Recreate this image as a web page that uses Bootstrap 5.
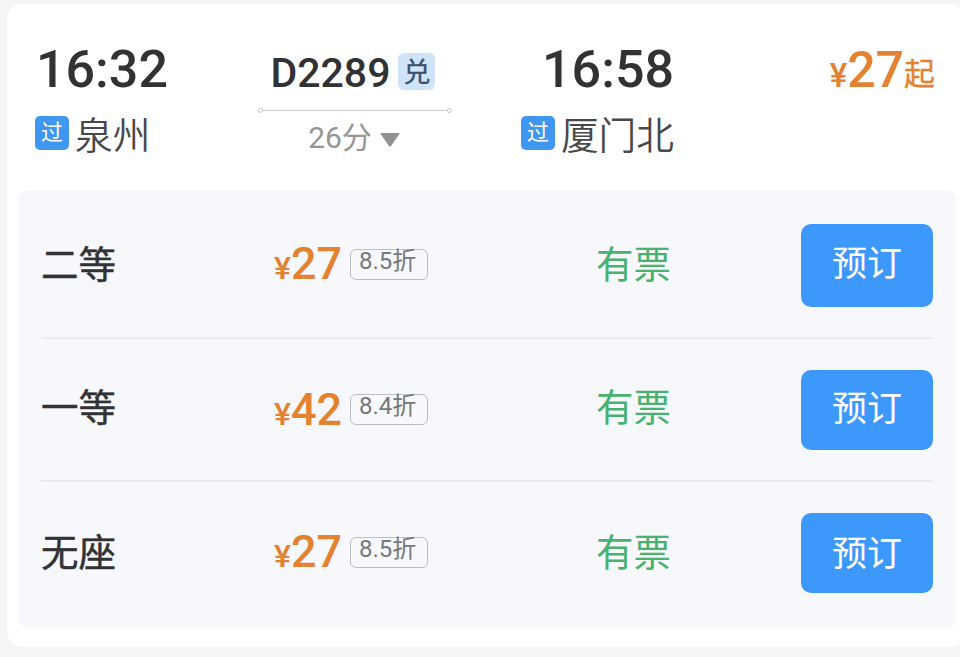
<!DOCTYPE html>
<html lang="zh-CN">
<head>
    <meta charset="UTF-8">
    <meta name="viewport" content="width=device-width, initial-scale=1">
    <title>D2289</title>
    <link href="https://cdn.jsdelivr.net/npm/bootstrap@5.3.0/dist/css/bootstrap.min.css" rel="stylesheet">
    <style>
        body {
            background: #f5f5f5;
            font-family: Roboto, "Noto Sans CJK SC", sans-serif;
            color: #323234;
            overflow: hidden;
        }

        .train-card {
            height: 643px;
            margin: 4px 0 0 7px;
            padding: 0 4px 0 11px;
            border-radius: 15px 6px 6px 15px;
        }

        /* Cabeçalho da viagem */
        .trip {
            height: 186px;
            padding: 36px 21px 0 17px;
        }

        .trip-from { width: 223px; }
        .trip-mid { width: 194px; padding-top: 3px; }
        .trip-to { width: 222px; }

        .trip-time {
            font-size: 52px;
            font-weight: 500;
            line-height: 60px;
        }

        .trip-from .trip-time { padding-left: 1px; }

        .station {
            height: 68px;
            font-size: 37.7px;
            font-weight: 350;
            line-height: 68px;
            color: #48484a;
        }

        .station-name { padding-top: 3px; }

        .pass-tag {
            width: 34px;
            height: 34px;
            margin: -2px 6px 0 0;
            border-radius: 5px;
            background: #3f97ef;
            color: #fff;
            font-size: 22px;
            font-weight: 400;
            line-height: 34px;
            text-align: center;
        }

        .train-no {
            padding-right: 4px;
            font-size: 41px;
            font-weight: 500;
            line-height: 60px;
        }

        .swap-tag {
            width: 37px;
            height: 37px;
            margin: -3px 0 0 8px;
            border-radius: 6px;
            background: #cfe3f9;
            color: #3a5068;
            font-size: 27px;
            font-weight: 400;
            line-height: 40px;
            text-align: center;
            -webkit-text-stroke: .3px;
        }

        .trip-line { height: 5px; margin-top: 5px; }
        .trip-line i { width: 5px; height: 5px; border: 1px solid #c4c4c4; border-radius: 50%; }
        .trip-line span { height: 1px; background: #cfcfcf; }

        .duration {
            padding-right: 2px;
            font-size: 30px;
            line-height: 49px;
            color: #969696;
        }

        .duration svg { margin-top: 4px; }

        .price { color: #e38332; font-weight: 500; }

        .trip-price {
            font-size: 50px;
            line-height: 60px;
        }

        .trip-price small { font-size: 33px; }
        .trip-price .price-from {
            position: relative;
            top: -2px;
            font-size: 31px;
            font-weight: 400;
            -webkit-text-stroke: .4px;
        }

        /* Lista de assentos */
        .seats {
            height: 438px;
            padding: 0 23px;
            border-radius: 10px;
            background: #f6f8fc;
        }

        .seat { height: 143px; border-bottom: 2px solid #e9ebee; }
        .seat:first-child { height: 149px; padding-top: 3px; }
        .seat:last-child { height: 142px; border: 0; }

        .seat-name, .seat-left {
            font-size: 37.5px;
            line-height: 60px;
        }

        .seat-name { width: 233px; -webkit-text-stroke: .45px; }
        .seat-price { width: 322px; }
        .seat-left { color: #48b26e; }

        .seat-price .price { padding-top: 2px; font-size: 45px; line-height: 60px; }
        .seat-price small { font-size: 32px; }

        .discount {
            width: 78px;
            height: 31px;
            margin: -1px 0 0 8px;
            padding-right: 3px;
            border: 1px solid #bcbec6;
            border-radius: 6px;
            color: #77787a;
            font-size: 24px;
            line-height: 22px;
            text-align: center;
        }

        .book-btn {
            width: 132px;
            height: 80px;
            padding: 0;
            border: 0;
            border-radius: 10px;
            background: #3d98fc;
            color: #fff;
            font-size: 35px;
            line-height: 60px;
        }

        .book-btn:hover { background: #2b86ea; color: #fff; }
        .seat:first-child .book-btn { height: 83px; }
        .seat:last-child .book-btn { padding-top: 3px; }
        .seat:nth-child(2) .seat-name, .seat:nth-child(2) .seat-left { padding-bottom: 3px; }
        .seat:nth-child(2) .price { padding-top: 4px; }
    </style>
</head>
<body>
    <div class="train-card bg-white">
        <div class="trip d-flex">
            <div class="trip-from">
                <div class="trip-time">16:32</div>
                <div class="station d-flex align-items-center"><span class="pass-tag">过</span><span class="station-name">泉州</span></div>
            </div>
            <div class="trip-mid">
                <div class="train-no d-flex align-items-center justify-content-center">D2289<span class="swap-tag">兑</span></div>
                <div class="trip-line d-flex align-items-center"><i></i><span class="flex-grow-1"></span><i></i></div>
                <div class="duration d-flex align-items-center justify-content-center">
                    26分
                    <svg class="ms-2" width="20" height="14" viewBox="0 0 20 14"><path d="M1 0h18q1 0 .4 1L11 13q-1 1-2 0L.6 1Q0 0 1 0z" fill="#929292"/></svg>
                </div>
            </div>
            <div class="trip-to d-flex flex-column align-items-end">
                <div class="trip-time">16:58</div>
                <div class="station d-flex align-items-center"><span class="pass-tag">过</span><span class="station-name">厦门北</span></div>
            </div>
            <div class="trip-price price ms-auto"><small>¥</small>27<small class="price-from">起</small></div>
        </div>

        <div class="seats">
            <div class="seat d-flex align-items-center">
                <div class="seat-name">二等</div>
                <div class="seat-price d-flex align-items-center"><span class="price"><small>¥</small>27</span><span class="discount">8.5折</span></div>
                <div class="seat-left">有票</div>
                <button type="button" class="btn book-btn ms-auto">预订</button>
            </div>
            <div class="seat d-flex align-items-center">
                <div class="seat-name">一等</div>
                <div class="seat-price d-flex align-items-center"><span class="price"><small>¥</small>42</span><span class="discount">8.4折</span></div>
                <div class="seat-left">有票</div>
                <button type="button" class="btn book-btn ms-auto">预订</button>
            </div>
            <div class="seat d-flex align-items-center">
                <div class="seat-name">无座</div>
                <div class="seat-price d-flex align-items-center"><span class="price"><small>¥</small>27</span><span class="discount">8.5折</span></div>
                <div class="seat-left">有票</div>
                <button type="button" class="btn book-btn ms-auto">预订</button>
            </div>
        </div>
    </div>

    <script src="https://cdn.jsdelivr.net/npm/bootstrap@5.3.0/dist/js/bootstrap.bundle.min.js"></script>
</body>
</html>
